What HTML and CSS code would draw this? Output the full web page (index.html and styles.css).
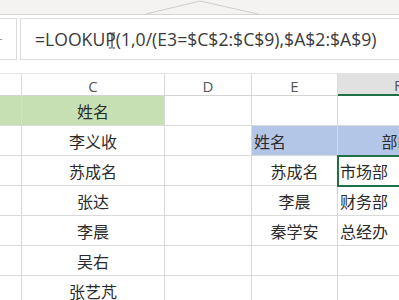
FILE: index.html
```html
<!DOCTYPE html>
<html>

<head>
    <meta name="viewport" content="width=device-width, initial-scale=1">
    <title>LOOKUP</title>
    <link rel="stylesheet" href="styles.css">
</head>

<body>
    <div class="window">
        <div class="ribbon">
            <svg width="399" height="14" viewBox="0 0 399 14">
                <polyline points="146,14 200,1 258,14" fill="none" stroke="#cfcdca" stroke-width="1"/>
            </svg>
        </div>

        <div class="formula-bar">
            <div class="name-box"><span class="name-mark"></span></div>
            <div class="formula-box">
                <span class="formula-text">=LOOKUP(1,0/(E3=$C$2:$C$9),$A$2:$A$9)</span>
                <svg class="ibeam" width="8" height="17" viewBox="0 0 8 17">
                    <path d="M1 1h2.5M4.5 1h2.5M4 1.5v14M1 16h2.5M4.5 16h2.5" stroke="#333" stroke-width="1.2" fill="none"/>
                </svg>
            </div>
        </div>

        <div class="sheet">
            <div class="col-head"></div>
            <div class="col-head">C</div>
            <div class="col-head">D</div>
            <div class="col-head">E</div>
            <div class="col-head selected">F</div>

            <div class="cell green"></div>
            <div class="cell green center">姓名</div>
            <div class="cell"></div>
            <div class="cell"></div>
            <div class="cell"></div>

            <div class="cell"></div>
            <div class="cell center">李义收</div>
            <div class="cell"></div>
            <div class="cell blue">姓名</div>
            <div class="cell blue center">部门</div>

            <div class="cell"></div>
            <div class="cell center">苏成名</div>
            <div class="cell"></div>
            <div class="cell center">苏成名</div>
            <div class="cell active">市场部</div>

            <div class="cell"></div>
            <div class="cell center">张达</div>
            <div class="cell"></div>
            <div class="cell center">李晨</div>
            <div class="cell">财务部</div>

            <div class="cell"></div>
            <div class="cell center">李晨</div>
            <div class="cell"></div>
            <div class="cell center">秦学安</div>
            <div class="cell">总经办</div>

            <div class="cell"></div>
            <div class="cell center">吴右</div>
            <div class="cell"></div>
            <div class="cell"></div>
            <div class="cell"></div>

            <div class="cell"></div>
            <div class="cell center">张艺芃</div>
            <div class="cell"></div>
            <div class="cell"></div>
            <div class="cell"></div>
        </div>
    </div>
</body>

</html>
```

FILE: styles.css
```css
body {
    margin: 0;
    padding: 0;
    background: #fff;
    font-family: "Noto Sans CJK SC", "Noto Sans", sans-serif;
    color: #2b2b2b;
}

.window {
    width: 399px;
    height: 300px;
    overflow: hidden;
}

.ribbon {
    height: 14px;
    background: #f4f3f1;
    border-bottom: 1px solid #d6d4d1;
}

.ribbon svg {
    display: block;
}

.formula-bar {
    display: flex;
    gap: 3px;
    height: 42px;
    margin-top: 3px;
}

.name-box {
    width: 17px;
    box-sizing: border-box;
    border: 1px solid #dcdcdc;
    border-left: none;
    display: flex;
    align-items: center;
}

.name-mark {
    width: 2px;
    height: 1px;
    background: #9a9a9a;
}

.formula-box {
    flex: 1;
    box-sizing: border-box;
    border: 1px solid #dcdcdc;
    border-right: none;
    display: flex;
    align-items: center;
    padding-left: 14px;
    position: relative;
    white-space: nowrap;
}

.formula-text {
    font-family: "Open Sans", "Noto Sans", sans-serif;
    font-size: 17.6px;
    color: #3a3a3a;
    letter-spacing: 0;
}

.ibeam {
    position: absolute;
    left: 87px;
    top: 13px;
}

.sheet {
    display: grid;
    grid-template-columns: 22px 143px 87px 86px 120px;
    margin-top: 13px;
    border-top: 1px solid #e4e4e4;
    width: 458px;
}

.col-head {
    border-right: 1px solid #dadada;
    border-bottom: 1px solid #d4d4d4;
    display: flex;
    align-items: center;
    justify-content: center;
    font-family: "Open Sans", "Noto Sans", sans-serif;
    font-size: 15px;
    color: #555;
    padding-top: 2px;
    box-sizing: content-box;
    height: 19px;
}

.col-head.selected {
    background: #e1e1e1;
    border-bottom: 2px solid #1e7145;
    height: 18px;
    justify-content: flex-start;
    padding-left: 56px;
}

.cell {
    height: 29px;
    border-right: 1px solid #dadada;
    border-bottom: 1px solid #dadada;
    display: flex;
    align-items: center;
    padding-left: 2px;
    font-size: 16px;
    white-space: nowrap;
    box-sizing: content-box;
}

.cell.center {
    justify-content: center;
    padding-left: 0;
}

.cell.green {
    background: #c6e0b4;
}

.cell.blue {
    background: #b4c6e7;
}

.cell.active {
    outline: 2px solid #1e7145;
    outline-offset: -1px;
    position: relative;
}
```
